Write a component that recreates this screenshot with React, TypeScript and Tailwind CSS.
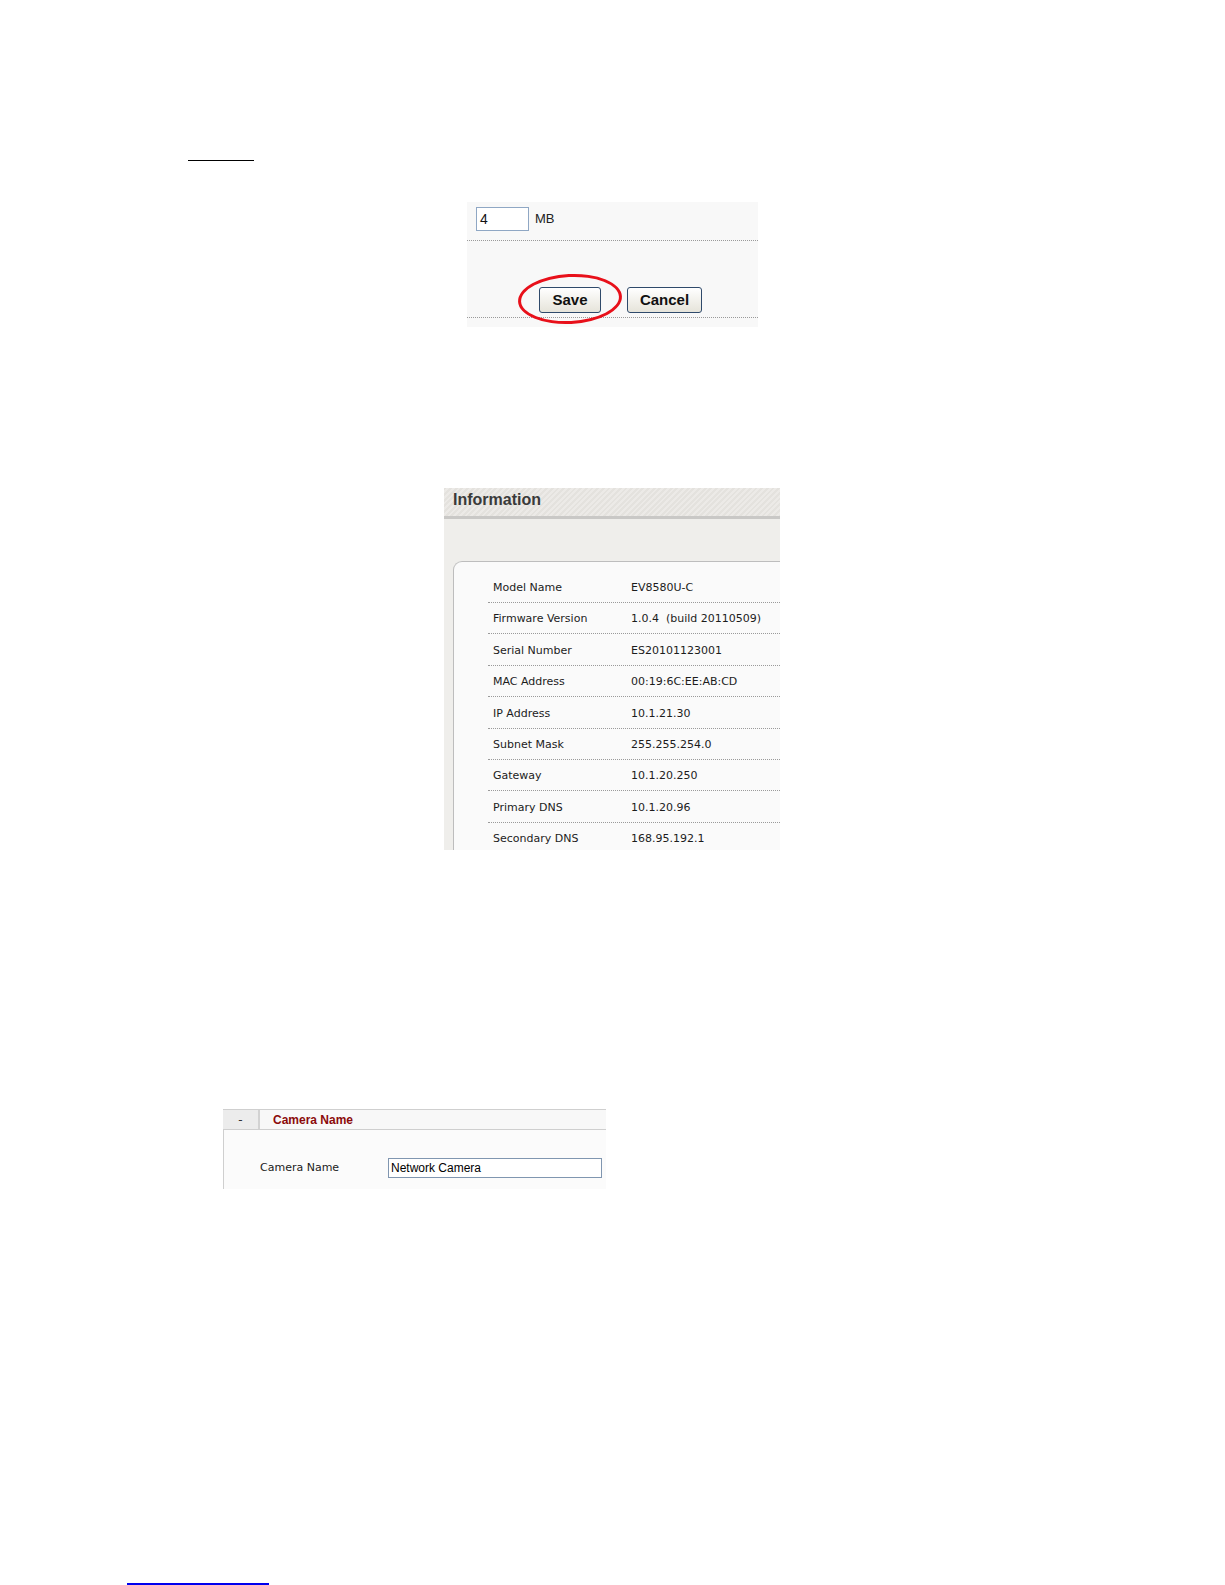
import React from "react";

const rows: [string, string][] = [
  ["Model Name", "EV8580U-C"],
  ["Firmware Version", "1.0.4  (build 20110509)"],
  ["Serial Number", "ES20101123001"],
  ["MAC Address", "00:19:6C:EE:AB:CD"],
  ["IP Address", "10.1.21.30"],
  ["Subnet Mask", "255.255.254.0"],
  ["Gateway", "10.1.20.250"],
  ["Primary DNS", "10.1.20.96"],
  ["Secondary DNS", "168.95.192.1"],
];

export default function App() {
  return (
    <div className="w-[1225px] h-[1585px] bg-white flex flex-col overflow-hidden">
      {/* top black rule */}
      <div className="mt-[160px] ml-[188px] w-[66px] h-px bg-black" />

      {/* Save / Cancel panel */}
      <div className="mt-[41px] ml-[467px] w-[291px] h-[125px] bg-[#f8f8f8] relative flex flex-col">
        <div className="h-[39px] border-b border-dotted border-[#9a9a9a] flex items-start pt-[5px] pl-[9px] gap-[6px]">
          <div className="w-[53px] h-[24px] border border-[#8fa7c4] bg-white flex items-center pl-[3px] text-[14px] text-[#111] font-['Liberation_Sans',sans-serif]">
            4
          </div>
          <span className="h-[24px] flex items-center text-[13px] text-[#222] font-['Liberation_Sans',sans-serif]">
            MB
          </span>
        </div>
        <div className="h-[77px] border-b border-dotted border-[#9a9a9a] flex items-start pt-[46px] pl-[72px] gap-[26px]">
          <button className="w-[62px] h-[26px] rounded-[3px] border border-[#2f4a6b] bg-linear-to-b from-white to-[#e6e4da] text-[15px] font-bold text-[#111] font-['Liberation_Sans',sans-serif] flex items-center justify-center">
            Save
          </button>
          <button className="w-[75px] h-[26px] rounded-[3px] border border-[#2f4a6b] bg-linear-to-b from-white to-[#e6e4da] text-[15px] font-bold text-[#111] font-['Liberation_Sans',sans-serif] flex items-center justify-center">
            Cancel
          </button>
        </div>
        {/* red highlight ellipse */}
        <div className="absolute left-[51px] top-[72px] w-[104px] h-[50px] rounded-[50%] border-[3px] border-[#e8101a] rotate-[-3deg]" />
      </div>

      {/* Information panel */}
      <div className="mt-[161px] ml-[444px] w-[336px] h-[364px] bg-[#efeeeb] flex flex-col overflow-hidden">
        <div className="h-[40px] border-b-[3px] border-[#c9c8c6] bg-[repeating-linear-gradient(135deg,#e4e2de_0px,#e4e2de_2px,#eceae7_2px,#eceae7_4px)] flex items-center pl-[9px] pb-[4px]">
          <span className="text-[16px] font-bold text-[#3a3a3a] font-['Liberation_Sans',sans-serif]">
            Information
          </span>
        </div>
        <div className="flex-1 pt-[42px] pl-[9px] flex flex-col">
          <div className="flex-1 bg-[#fafafa] border-l border-t border-[#bdbdbd] rounded-tl-[9px] pt-[10px] pl-[34px]">
            {rows.map(([k, v]) => (
              <div
                key={k}
                className="h-[31.4px] border-b border-dotted border-[#9a9a9a] flex items-center pt-[3px] pl-[5px] text-[11px] text-[#1c1c1c] font-['DejaVu_Sans',sans-serif]"
              >
                <span className="w-[138px] shrink-0">{k}</span>
                <span className="whitespace-pre">{v}</span>
              </div>
            ))}
          </div>
        </div>
      </div>

      {/* Camera Name panel */}
      <div className="mt-[259px] ml-[223px] w-[383px] h-[80px] flex flex-col">
        <div className="h-[21px] border-t border-b border-[#cfcfcf] bg-[#f8f8f8] flex">
          <div className="w-[37px] bg-[#ececec] border-r-2 border-[#d2d2d2] flex items-center justify-center text-[12px] text-[#333] font-['DejaVu_Sans',sans-serif]">
            -
          </div>
          <div className="flex items-center pl-[13px] text-[12px] font-bold text-[#8b0a0a] font-['Liberation_Sans',sans-serif]">
            Camera Name
          </div>
        </div>
        <div className="flex-1 border-l border-[#cfcfcf] bg-[#fbfbfb] pt-[28px] pl-[36px] flex items-start">
          <span className="w-[128px] h-[20px] flex items-center text-[11px] text-[#1c1c1c] font-['DejaVu_Sans',sans-serif]">
            Camera Name
          </span>
          <div className="w-[214px] h-[20px] border border-[#8096b0] bg-white flex items-center pl-[2px] text-[12px] text-black font-['Liberation_Sans',sans-serif]">
            Network Camera
          </div>
        </div>
      </div>

      {/* bottom blue rule */}
      <div className="mt-[394px] ml-[127px] w-[142px] h-[2px] bg-[#0000ee]" />
    </div>
  );
}
